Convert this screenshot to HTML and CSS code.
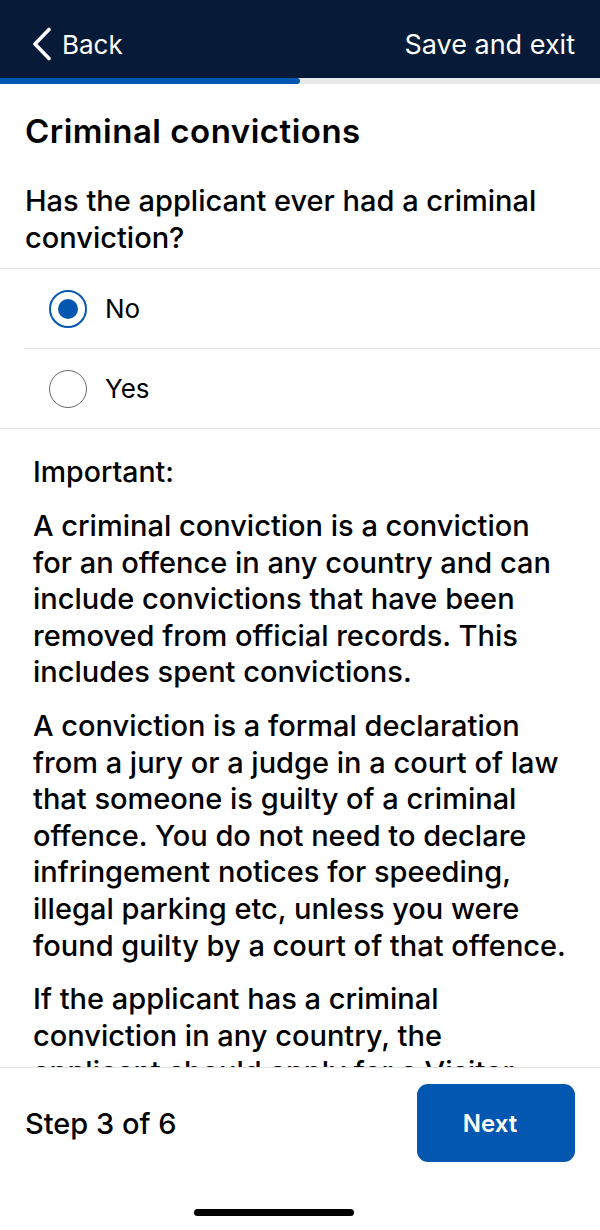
FILE: index.html
```html
<!DOCTYPE html>
<html lang="en">
<head>
    <meta charset="UTF-8">
    <title>Criminal convictions</title>
    <link rel="stylesheet" href="styles.css">
</head>
<body>
    <div class="screen">
        <header class="topbar">
            <a class="back" href="#">
                <svg class="chevron" width="20" height="34" viewBox="0 0 20 34">
                    <path d="M17 2.5 L3 17 L17 31.5" fill="none" stroke="#fff" stroke-width="3.6" stroke-linecap="round" stroke-linejoin="round"/>
                </svg>
                <span>Back</span>
            </a>
            <a class="save" href="#">Save and exit</a>
        </header>
        <div class="progress">
            <div class="progress-fill" style="width: 50%"></div>
        </div>

        <main class="content">
            <h1 class="title">Criminal convictions</h1>
            <p class="question">Has the applicant ever had a criminal conviction?</p>

            <div class="options">
                <label class="option">
                    <span class="radio radio-on"></span>
                    <span class="option-label">No</span>
                </label>
                <label class="option">
                    <span class="radio"></span>
                    <span class="option-label">Yes</span>
                </label>
            </div>

            <div class="notice">
                <p class="notice-title">Important:</p>
                <p>A criminal conviction is a conviction for an offence in any country and can include convictions that have been removed from official records. This includes spent convictions.</p>
                <p>A conviction is a formal declaration from a jury or a judge in a court of law that someone is guilty of a criminal offence. You do not need to declare infringement notices for speeding, illegal parking etc, unless you were found guilty by a court of that offence.</p>
                <p>If the applicant has a criminal conviction in any country, the applicant should apply for a Visitor visa instead.</p>
            </div>
        </main>

        <footer class="footer">
            <div class="footer-row">
                <span class="step">Step 3 of 6</span>
                <button class="next">Next</button>
            </div>
            <div class="home-bar"></div>
        </footer>
    </div>
</body>
</html>
```
FILE: styles.css
```css
body {
    margin: 0;
    font-family: Inter, 'Noto Sans', sans-serif;
    color: #000;
    background: #fff;
}

.screen {
    width: 600px;
    height: 1230px;
    display: flex;
    flex-direction: column;
    overflow: hidden;
}

/* top bar */
.topbar {
    height: 78px;
    box-sizing: border-box;
    flex-shrink: 0;
    background: #071b38;
    display: flex;
    align-items: center;
    justify-content: space-between;
    padding: 10px 25px 0 32px;
}

.topbar a {
    color: #fff;
    text-decoration: none;
}

.back {
    display: flex;
    align-items: center;
    gap: 10px;
    font-size: 26px;
}

.save {
    font-size: 27px;
}

.progress {
    height: 6px;
    flex-shrink: 0;
    background: #e8e8e8;
}

.progress-fill {
    height: 100%;
    background: #0457b0;
    border-radius: 0 3px 3px 0;
}

/* main content */
.content {
    flex: 1;
    overflow: hidden;
    padding-top: 29px;
}

.title {
    margin: 0 25px;
    font-size: 33px;
    line-height: 36px;
    font-weight: 600;
    letter-spacing: 0.5px;
}

.question {
    margin: 33px 25px 0;
    padding-bottom: 12px;
    font-size: 29px;
    line-height: 37px;
    font-weight: 500;
}

.options {
    border-top: 1px solid #e2e2e2;
    border-bottom: 1px solid #e2e2e2;
}

.option {
    height: 79px;
    display: flex;
    align-items: center;
    margin-left: 24px;
    padding-left: 25px;
    gap: 18px;
}

.option + .option {
    border-top: 1px solid #e2e2e2;
}

.radio {
    width: 38px;
    height: 38px;
    box-sizing: border-box;
    border: 1.5px solid #6a6a6a;
    border-radius: 50%;
    display: flex;
    align-items: center;
    justify-content: center;
}

.radio-on {
    border: 2px solid #0457b0;
}

.radio-on::after {
    content: '';
    width: 20px;
    height: 20px;
    border-radius: 50%;
    background: #0457b0;
}

.option-label {
    font-size: 26px;
}

.notice {
    padding: 24px 33px 0;
}

.notice p {
    margin: 0 0 17px;
    font-size: 29px;
    line-height: 36.6px;
    font-weight: 500;
}

.notice .notice-title {
    font-size: 28.5px;
    line-height: 37px;
    margin-bottom: 18px;
}

/* footer */
.footer {
    flex-shrink: 0;
    height: 162px;
    border-top: 1px solid #e2e2e2;
    display: flex;
    flex-direction: column;
}

.footer-row {
    display: flex;
    align-items: center;
    justify-content: space-between;
    padding: 16px 25px 0;
}

.step {
    font-size: 29px;
    font-weight: 500;
}

.next {
    width: 158px;
    height: 78px;
    padding: 0 12px 0 0;
    border: none;
    border-radius: 11px;
    background: #0457b0;
    color: #fff;
    font-family: inherit;
    font-size: 24px;
    font-weight: 600;
}

.home-bar {
    margin: 47px 0 0 194px;
    width: 160px;
    height: 7px;
    border-radius: 4px;
    background: #000;
}
```
